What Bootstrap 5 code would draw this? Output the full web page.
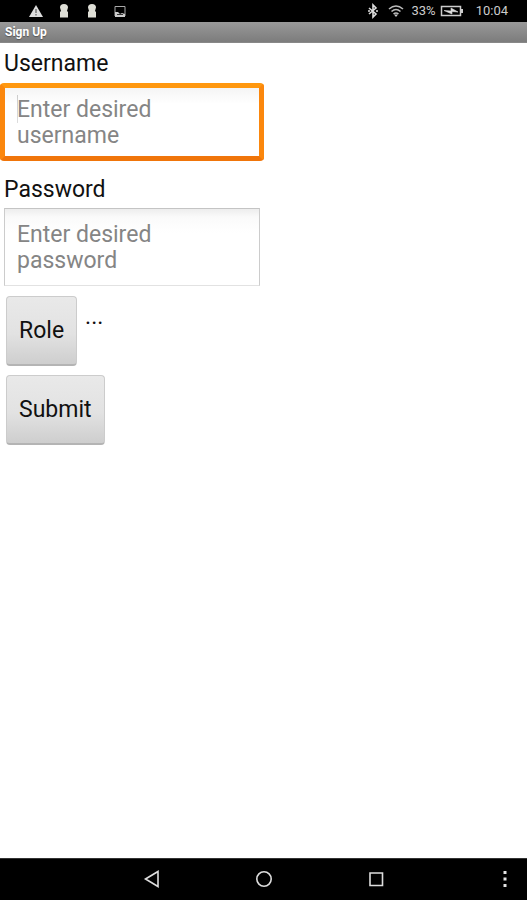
<!DOCTYPE html>
<html lang="en">
<head>
<meta charset="utf-8">
<meta name="viewport" content="width=device-width, initial-scale=1">
<title>Sign Up</title>
<link href="https://cdn.jsdelivr.net/npm/bootstrap@5.3.0/dist/css/bootstrap.min.css" rel="stylesheet">
<style>
  body { font-family: Roboto, sans-serif; font-size: 23px; line-height: 26px; color: #111; background: #fff; }
  svg { display: block; }
  .status-bar { height: 22px; background: #000; color: #ccc; font-size: 13px; line-height: 22px; padding: 0 19px 0 28px; }
  .notices { gap: 12px; }
  .radios { gap: 7px; margin-right: 7px; }
  .clock { margin-left: 12px; }
  .title-bar { height: 21px; font-size: 12px; line-height: 21px; padding-left: 5px; color: #fff; background: linear-gradient(#999, #7c7c7c); border-bottom: 1px solid #888; text-shadow: 0 1px 1px #555; }
  .field-label { padding: 8px 4px 6px; }
  .field-label-next { padding-bottom: 5px; }
  .field { height: 78px; resize: none; border-radius: 0; font-size: 23px; line-height: 26px; overflow: hidden; color: #111; }
  .field::placeholder { color: #858585; opacity: 1; }
  .field-active, .field-active:focus { border: 5px solid; border-color: #ff980f #fb870d #f0750a; border-radius: 4px; padding: 9px 12px; box-shadow: none;
    background: linear-gradient(#ccc, #ddd) 12px 7px / 1px 28px no-repeat, linear-gradient(#f5f5f5, #fff 16px); }
  .field-idle { border: 1px solid #ccc; border-color: #c4c4c4 #ccc #e2e2e2; padding: 13px 12px; background: linear-gradient(#ededed, #fafafa 8px, #fff 24px); }
  .key { font-size: 23px; line-height: 26px; height: 70px; padding: 0 12px; color: #111; border: 1px solid #ccc; border-bottom: 2px solid #b4b4b4; border-radius: 4px; background: linear-gradient(#e9e9e9, #e2e2e2 55%, #cecece); }
  .key:hover, .key:active { color: #111; background: #d5d5d5; }
  .key-list { padding: 10px 6px; gap: 9px; }
  .nav-keys { height: 42px; background: #000; border-top: 1px solid #333; display: grid; grid-template-columns: 1fr 48px 1fr; }
  .nav-key { width: 48px; height: 40px; padding: 0; border: 0; background: none; display: grid; place-items: center; }
  .nav-more { width: 44px; }
  .side-gap { margin: 0 64px; }
</style>
<script src="https://cdn.jsdelivr.net/npm/bootstrap@5.3.0/dist/js/bootstrap.bundle.min.js"></script>
</head>
<body class="d-flex flex-column min-vh-100">
<header>
  <div class="status-bar d-flex justify-content-between align-items-center">
    <div class="notices d-flex align-items-center">
      <svg width="16" height="16" viewBox="0 0 16 16"><path d="M8 2 15 14H1z" fill="#ddd"/><path d="M8 6v4M8 11v1.5" stroke="#777" stroke-width="1.5"/></svg>
      <svg width="16" height="16" viewBox="0 0 16 16"><path d="M4 4.500Q4 1 8 1t4 3.500L11 8l1 1v5.500H4V9l1-1z" fill="#deded6"/></svg>
      <svg width="16" height="16" viewBox="0 0 16 16"><path d="M4 4.500Q4 1 8 1t4 3.500L11 8l1 1v5.500H4V9l1-1z" fill="#deded6"/></svg>
      <svg width="16" height="16" viewBox="0 0 16 16"><path d="M3 3.500h10v9.500H3z" fill="none" stroke="#aaa"/><path d="M3 9l3 0 2 2 2-1 3 1v3H3z" fill="#ccc"/><path d="M5 11.500h6" stroke="#333"/></svg>
    </div>
    <div class="d-flex align-items-center">
      <div class="radios d-flex">
        <svg width="16" height="16" viewBox="0 0 16 16" fill="none" stroke="#ddd" stroke-width="1.6"><path d="m4 5 7 6-3 3V2l3 3-7 6M3 8h2M11 8h2"/></svg>
        <svg width="16" height="16" viewBox="0 0 16 16" fill="none" stroke="#bbb" stroke-width="1.6"><path d="M1 6q7-6 14 0M3.500 8.500q4.500-4 9 0M5.500 11q2.500-2 5 0"/><path d="M6 11.500h4L8 14z" fill="#ccc" stroke="none"/></svg>
      </div>
      <span>33%</span>
      <svg class="ms-1" width="24" height="16" viewBox="0 0 24 16"><path d="M1.500 3.500h19v9h-19z" fill="none" stroke="#ccc" stroke-width="1.500"/><path d="M21 6h2v4h-2z" fill="#ccc"/><path d="m4 7.500 7 .5V5l7 4-6-.5V11z" fill="#ddd" stroke="#ddd" stroke-width=".6"/></svg>
      <span class="clock">10:04</span>
    </div>
  </div>
  <h1 class="title-bar fw-bold m-0">Sign Up</h1>
</header>
<main class="flex-grow-1">
  <form>
    <label class="field-label d-block" for="username">Username</label>
    <textarea class="field field-active form-control w-50" id="username" rows="2" placeholder="Enter desired username"></textarea>
    <label class="field-label field-label-next d-block mt-2" for="password">Password</label>
    <div class="w-50 px-1"><textarea class="field field-idle form-control" id="password" rows="2" placeholder="Enter desired password"></textarea></div>
    <div class="key-list d-flex flex-column align-items-start">
      <div class="d-flex align-items-start">
        <button class="key btn" type="button">Role</button>
        <span class="ms-2 mt-2">...</span>
      </div>
      <button class="key btn" type="submit">Submit</button>
    </div>
  </form>
</main>
<nav class="nav-keys" aria-label="System">
  <div class="d-flex justify-content-end"><button class="nav-key side-gap" type="button" aria-label="Back"><svg width="20" height="20" viewBox="0 0 20 20"><path d="M3.500 10 16 2.500v15z" fill="none" stroke="#ddd" stroke-width="1.600"/></svg></button></div>
  <button class="nav-key" type="button" aria-label="Home"><svg width="20" height="20" viewBox="0 0 20 20"><circle cx="10" cy="10" r="7.200" fill="none" stroke="#ddd" stroke-width="1.600"/></svg></button>
  <div class="d-flex justify-content-between"><button class="nav-key side-gap me-0" type="button" aria-label="Recent apps"><svg width="20" height="20" viewBox="0 0 20 20"><path d="M4 4h12.500v12.500H4z" fill="none" stroke="#ddd" stroke-width="1.600"/></svg></button>
  <button class="nav-key nav-more" type="button" aria-label="More"><svg width="20" height="20" viewBox="0 0 20 20" fill="#e4e4e4"><path d="M8.500 2h3v3h-3zM8.500 8.500h3v3h-3zM8.500 15h3v3h-3z"/></svg></button></div>
</nav>
</body>
</html>
